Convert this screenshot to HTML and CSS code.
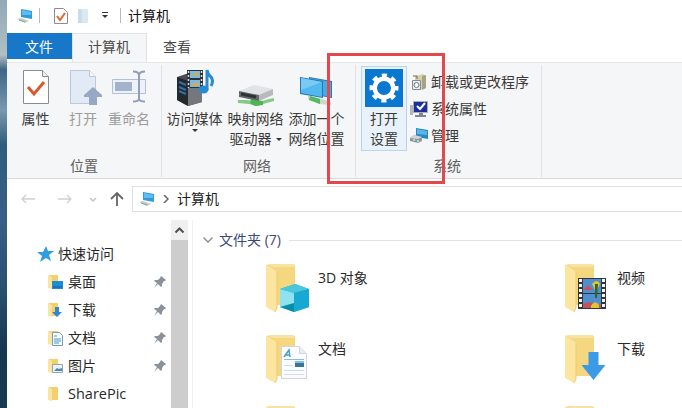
FILE: index.html
```html
<!DOCTYPE html>
<html lang="zh-CN">

<head>
  <meta charset="UTF-8" />
  <title>计算机</title>
  <link rel="stylesheet" href="styles.css">
</head>

<body>
  <!-- shared icons -->
  <svg class="defs" width="0" height="0">
    <symbol id="pc" viewBox="0 0 18 16">
      <path d="M5 1l11 2v8L5 9z" fill="#2e9bdc" />
      <path d="M6 2l9 2v3L6 7z" fill="#61bdf0" />
      <path d="M1 11l4-1 8 3-4 2z" fill="#c5cbd0" />
      <path d="M3 12l6 2" stroke="#8f9ba5" />
    </symbol>
    <symbol id="folder" viewBox="0 0 44 50">
      <path d="M1 2h28v40H10z" fill="#f5d77f" />
      <path d="M1 1h27v3H7z" fill="#f7e3a4" />
      <path d="M0 1l11 8v36l-2 4-9-5z" fill="#fce5a0" />
      <path d="M11 9v36l-2 4" fill="none" stroke="#edcb6d" />
    </symbol>
    <symbol id="small-folder" viewBox="0 0 14 16">
      <path d="M1 1h9v13H1z" fill="#f4cf6e" />
      <path d="M0 1l4 2v12l-4-1z" fill="#fbe3a0" />
    </symbol>
    <symbol id="pin" viewBox="0 0 12 12">
      <path d="M7 0l5 4-1 1-1 0-2 3 0 2-1 1-3-3-4 4 3-5-3-2 1-1h3l2-2z" fill="#8a9198" />
    </symbol>
    <symbol id="down" viewBox="0 0 24 28">
      <path d="M7 0h10v13h7L12 28 0 13h7z" fill="#3b9be6" />
    </symbol>
  </svg>

  <div class="desktop">
    <div class="window">
      <header class="titlebar">
        <svg class="title-pc" width="18" height="16"><use href="#pc" /></svg>
        <i class="title-sep"></i>
        <svg class="title-check" width="14" height="16" viewBox="0 0 14 16">
          <path d="M.5 .5h9l4 4v11H.5z" fill="#fff" stroke="#8d8d8d" />
          <path d="M3 8l3 4 5-7" fill="none" stroke="#e0672c" stroke-width="2" />
        </svg>
        <svg class="title-page" width="11" height="16" viewBox="0 0 11 16">
          <path d="M0 1h10v14H0z" fill="#dae8f3" />
          <path d="M0 1l4 1v13H0z" fill="#c9dcea" />
        </svg>
        <svg class="title-more" width="8" height="7" viewBox="0 0 8 7">
          <path d="M1 .5h6" stroke="#333" />
          <path d="M1 3h6L4 6z" fill="#333" />
        </svg>
        <i class="title-sep"></i>
        <span class="title">计算机</span>
      </header>

      <nav class="tabs">
        <span class="tab file">文件</span>
        <span class="tab active">计算机</span>
        <span class="tab">查看</span>
      </nav>

      <section class="ribbon">
        <div class="group location">
          <div class="buttons">
            <div class="big w-prop">
              <svg width="38" height="38" viewBox="0 0 38 38">
                <path d="M6.500 1.500h19l6 6v27h-25z" fill="#fff" stroke="#8b8b8b" />
                <path d="M25.500 1.500v6h6" fill="#eee" stroke="#8b8b8b" />
                <path d="M11 18l6 7 10-12" fill="none" stroke="#d9592b" stroke-width="3" />
              </svg>
              <span>属性</span>
            </div>
            <div class="big w-open disabled">
              <svg width="38" height="38" viewBox="0 0 38 38">
                <path d="M6.500 1.500h19l6 6v27h-25z" fill="#e2eaf5" stroke="#bcc8da" />
                <path d="M25.500 1.500v6h6" fill="#f4f7fb" stroke="#bcc8da" />
                <path d="M20 28v-2l9-8 9 8v2h-5v8h-8v-8z" fill="#98a8c4" />
              </svg>
              <span>打开</span>
            </div>
            <div class="big w-rename disabled">
              <svg width="38" height="38" viewBox="0 0 38 38">
                <path d="M2.500 10.500h33v14h-33z" fill="#edf2f9" stroke="#b1c0d8" />
                <path d="M5 13h17v9H5z" fill="#a3b3cd" />
                <path d="M23 2.500q6 0 6 4v23q0 3-6 3M35 2.500q-6 0-6 4v23q0 3 6 3" fill="none" stroke="#909eb8" stroke-width="2" />
              </svg>
              <span>重命名</span>
            </div>
          </div>
          <div class="caption">位置</div>
        </div>

        <div class="group network">
          <div class="buttons">
            <div class="big w-net">
              <svg width="38" height="38" viewBox="0 0 38 38">
                <path d="M1 8l12-4 13 5v24l-14 4L1 31z" fill="#4a4e54" />
                <path d="M1 8l11 4v25L1 31z" fill="#24282d" />
                <path d="M12 12l14-4v25l-14 4z" fill="#74787d" />
                <path d="M3 13l7 3M3 18l7 3M3 22l7 3" stroke="#2c70a5" stroke-width="2" />
                <path d="M11 1h16v18H11z" fill="#2d3035" />
                <path d="M14 2h10v7H14zM14 11h10v7H14z" fill="#80b7dc" />
                <path d="M17 7l3-4 3 4zM16 17l3-4 5 4z" fill="#d7ae45" />
                <path d="M12.500 2v17M25.500 2v17" stroke="#ddd" stroke-width="1.500" stroke-dasharray="2 2" />
                <ellipse cx="27.500" cy="20.500" rx="5" ry="4" fill="#268bd2" />
                <path d="M31 21V1q1 5 4 7 3 4 0 9" fill="none" stroke="#268bd2" stroke-width="3" />
              </svg>
              <span>访问媒体</span>
              <i class="arrow"></i>
            </div>
            <div class="big w-net">
              <svg width="38" height="38" viewBox="0 0 38 38">
                <path d="M1 31h9l12 2 10-3 5-1v3l-11 3-7 2-7-2-11-1z" fill="#83c988" />
                <path d="M14 30l12 2v4l-8 1-5-3z" fill="#4db653" />
                <path d="M2 22l15-6 19 4-14 7z" fill="#e1e3e4" />
                <path d="M2 22l20 4v6L2 28z" fill="#64686a" />
                <path d="M22 26l14-6v6l-14 6z" fill="#b6babc" />
                <path d="M4 25l15 3" stroke="#2e3335" stroke-width="3" />
              </svg>
              <span>映射网络</span>
              <span>驱动器<i class="arrow side"></i></span>
            </div>
            <div class="big w-net">
              <svg width="38" height="38" viewBox="0 0 38 38">
                <path d="M10 27l11 2 12 4v3l-12-1-11-5z" fill="#c8d8cb" />
                <path d="M12 27l10 3v5l-11-4z" fill="#53b964" />
                <path d="M11 8l23 4v17l-23-4z" fill="#3178b5" />
                <path d="M12 9l21 4v15l-21-4z" fill="#3eb0e6" />
                <path d="M2 8l23 4v17L2 25z" fill="#2875b5" />
                <path d="M3 9l21 4v15L3 24z" fill="#51b9ed" />
                <path d="M3 9l21 4L3 21z" fill="#79cbf3" />
              </svg>
              <span>添加一个</span>
              <span>网络位置</span>
            </div>
          </div>
          <div class="caption">网络</div>
        </div>

        <div class="group system">
          <div class="buttons">
            <div class="big settings">
              <svg width="38" height="38" viewBox="0 0 38 38">
                <path d="M0 0h38v38H0z" fill="#0a78d1" />
                <circle cx="19" cy="19" r="12.500" fill="none" stroke="#fff" stroke-width="4" stroke-dasharray="5 4.817" stroke-dashoffset="2.500" />
                <circle cx="19" cy="19" r="9.250" fill="none" stroke="#fff" stroke-width="4.500" />
              </svg>
              <span>打开</span>
              <span>设置</span>
            </div>
            <div class="small-list">
              <div class="small">
                <svg width="18" height="18" viewBox="0 0 18 18">
                  <path d="M5 3l8-2 3 2v12l-6 2-5-3z" fill="#d9d0a9" />
                  <path d="M12 3l4-1v13l-4 2z" fill="#a4a288" />
                  <path d="M2.500 7.500h8v9h-8z" fill="#e9ecee" stroke="#858c91" />
                  <circle cx="6.500" cy="12" r="2.500" fill="#fff" stroke="#637888" />
                  <path d="M3 3h4v3" fill="none" stroke="#6b6b58" />
                </svg>
                <span>卸载或更改程序</span>
              </div>
              <div class="small">
                <svg width="18" height="18" viewBox="0 0 18 18">
                  <path d="M0 5h3v10H0z" fill="#b1b6bd" />
                  <path d="M3 1h15v12H3z" fill="#a9b0bb" />
                  <path d="M4 2h13v10H4z" fill="#1c2f9c" />
                  <path d="M7 6l3 3 5-6" fill="none" stroke="#fff" stroke-width="2" />
                  <path d="M9 13h4v2h3v2H5v-2h4z" fill="#7e8490" />
                </svg>
                <span>系统属性</span>
              </div>
              <div class="small">
                <svg width="18" height="18" viewBox="0 0 18 18">
                  <path d="M6 1l12 2v9L6 10z" fill="#2489c5" />
                  <path d="M7 2l10 2v4L7 7z" fill="#59b5e5" />
                  <path d="M0 11l4-3 8 2v4l-4 2-8-2z" fill="#8c9a9f" />
                  <path d="M0 11l4-3 8 2-4 2z" fill="#cfd7da" />
                  <path d="M4 12v2M8 13v2" stroke="#fff" />
                </svg>
                <span>管理</span>
              </div>
            </div>
          </div>
          <div class="caption">系统</div>
        </div>
      </section>

      <div class="address-row">
        <svg class="nav-arrows" width="106" height="20" viewBox="0 0 106 20" fill="none">
          <path d="M15 10H2M6 6l-4 4 4 4M38 10h13M47 6l4 4-4 4" stroke="#cfcfcf" stroke-width="1.300" />
          <path d="M70 9l3 3 3-3" stroke="#c4c4c4" stroke-width="1.500" />
          <path d="M97 17V4M91 10l6-6 6 6" stroke="#666" stroke-width="1.800" />
        </svg>
        <div class="address">
          <svg width="18" height="16"><use href="#pc" /></svg>
          <svg class="crumb" width="6" height="8" viewBox="0 0 6 8"><path d="M1 0l4 4-4 4" fill="none" stroke="#666" stroke-width="1.500" /></svg>
          <span>计算机</span>
        </div>
      </div>

      <main class="body">
        <aside class="sidebar">
          <div class="side-head">
            <svg width="17" height="16" viewBox="0 0 17 16"><path d="M9 0l2 5 6 0-5 4 2 6-5-3-6 4 2-6-5-4h6z" fill="#2f9ee2" /></svg>
            <span>快速访问</span>
          </div>
          <div class="side-item">
            <svg width="15" height="16" viewBox="0 0 15 16"><use href="#small-folder" width="14" height="16" /><path d="M4 7h11v8H4z" fill="#1c8cd7" /><path d="M5 13h9" stroke="#145c9a" /></svg>
            <span>桌面</span>
            <svg class="pin" width="12" height="12"><use href="#pin" /></svg>
          </div>
          <div class="side-item">
            <svg width="15" height="16" viewBox="0 0 15 16"><use href="#small-folder" width="14" height="16" /><path d="M7 5h4v5h3l-5 5-5-5h3z" fill="#3188d0" /></svg>
            <span>下载</span>
            <svg class="pin" width="12" height="12"><use href="#pin" /></svg>
          </div>
          <div class="side-item">
            <svg width="15" height="16" viewBox="0 0 15 16"><use href="#small-folder" width="14" height="16" /><path d="M4.500 2.500h7l3 3v10h-10z" fill="#f7fbff" stroke="#7a9ab2" /><path d="M6 6h3M6 9h7M6 11h7M6 13h5" stroke="#4a91c4" /></svg>
            <span>文档</span>
            <svg class="pin" width="12" height="12"><use href="#pin" /></svg>
          </div>
          <div class="side-item">
            <svg width="15" height="16" viewBox="0 0 15 16"><use href="#small-folder" width="14" height="16" /><path d="M4.500 6.500h10v8h-10z" fill="#e9f3fa" stroke="#94a5b1" /><path d="M6 13l3-3 2 1 3-1v3z" fill="#4f87ae" /></svg>
            <span>图片</span>
            <svg class="pin" width="12" height="12"><use href="#pin" /></svg>
          </div>
          <div class="side-item">
            <svg width="15" height="16" viewBox="0 0 15 16"><use href="#small-folder" width="14" height="16" /></svg>
            <span class="latin">SharePic</span>
          </div>
        </aside>

        <div class="scrollbar">
          <svg width="17" height="20" viewBox="0 0 17 20"><path d="M4.500 12.500l4-4 4 4" fill="none" stroke="#505050" stroke-width="2" /></svg>
          <div class="thumb"></div>
        </div>

        <section class="content">
          <div class="section-head">
            <svg width="10" height="6" viewBox="0 0 10 6"><path d="M.5 .5L5 5 9.500 .5" fill="none" stroke="#888" stroke-width="1.300" /></svg>
            <span>文件夹 (7)</span>
            <i></i>
          </div>
          <div class="folders">
            <div class="folder">
              <svg width="44" height="50" viewBox="0 0 44 50">
                <use href="#folder" width="44" height="50" />
                <path d="M14 26l15-5 14 5v18l-15 5-14-5z" fill="#20b1d2" />
                <path d="M14 26l14 4v19l-14-5z" fill="#8fe3ee" />
                <path d="M14 26l15-5 14 5-15 4z" fill="#49c8dd" />
                <path d="M28 30l15-4v18l-15 5z" fill="#18a9d3" />
                <path d="M14 44l14-4v9z" fill="#078da9" />
              </svg>
              <span>3D 对象</span>
            </div>
            <div class="folder">
              <svg width="44" height="50" viewBox="0 0 44 50">
                <use href="#folder" width="44" height="50" />
                <path d="M13 15h28v31H13z" fill="#32353a" />
                <path d="M18 16h18v14H18zM18 31h18v14H18z" fill="#4f8fd0" />
                <path d="M18 27l5-5 5 5zM18 41l6-2 12 3v3H18z" fill="#c4545b" />
                <path d="M27 21q5-6 8 0l-3 6h-2zM26 43q4-7 8-1v3h-8z" fill="#e3c62f" />
                <path d="M30 21h3l-1 14h-2z" fill="#2c6828" />
                <path d="M15.500 16v29M38.500 16v29" stroke="#f5f5f5" stroke-width="3" stroke-dasharray="3 2" />
              </svg>
              <span>视频</span>
            </div>
            <div class="folder">
              <svg width="44" height="50" viewBox="0 0 44 50">
                <use href="#folder" width="44" height="50" />
                <path d="M15.500 12.500h18l7 7v25h-25z" fill="#fbfcff" stroke="#d0d5df" />
                <path d="M33.500 12.500v7h7" fill="#eceaf2" stroke="#d0d5df" />
                <path d="M18 23l5-7 1 7M20 21h4" fill="none" stroke="#499dc6" stroke-width="1.500" />
                <path d="M18 25.500h20" stroke="#8bbbd5" />
                <path d="M18 31.500h9M18 36.500h20M18 40.500h20" stroke="#d4dae5" />
                <path d="M29 27h9v6h-9z" fill="#3c7394" />
                <path d="M29 27h9v2h-9z" fill="#7ec2df" />
              </svg>
              <span>文档</span>
            </div>
            <div class="folder">
              <svg width="44" height="50" viewBox="0 0 44 50">
                <use href="#folder" width="44" height="50" />
                <use href="#down" x="16" y="18" width="25" height="28" />
              </svg>
              <span>下载</span>
            </div>
            <div class="folder"><svg width="44" height="50"><use href="#folder" /></svg></div>
            <div class="folder"><svg width="44" height="50"><use href="#folder" /></svg></div>
          </div>
        </section>
      </main>
    </div>
    <div class="highlight"></div>
  </div>
</body>

</html>
```
FILE: styles.css
```css
* {
  box-sizing: border-box;
}

body {
  margin: 0;
  font-family: "Open Sans", "Noto Sans CJK SC", sans-serif;
  font-size: 14px;
  line-height: 20px;
  color: #3a3a3a;
}

svg {
  display: block;
  flex-shrink: 0;
}

.defs {
  position: absolute;
}

.desktop {
  position: relative;
  width: 682px;
  height: 408px;
  padding-left: 7px;
  overflow: hidden;
  background: linear-gradient(#91a8b7, #b3bfc0 55px, #3f6685 70px, #7899ae 110px, #315c7d 145px, #385f87 220px, #29506d 290px, #153850 350px, #193c54);
}

.window {
  height: 408px;
  background: #fff;
  overflow: hidden;
}

.titlebar {
  display: flex;
  align-items: center;
  height: 33px;
  padding: 0 0 2px 9px;
}

.title-sep {
  width: 1px;
  height: 15px;
  margin-left: 5px;
  background: #b9b9b9;
}

.title-check {
  margin-left: 14px;
}

.title-page {
  margin-left: 10px;
}

.title-more {
  margin-left: 12px;
}

.title-more + .title-sep {
  margin-left: 11px;
}

.title {
  margin-left: 7px;
  color: #111;
}

.tabs {
  display: flex;
  height: 29px;
}

.tab {
  height: 29px;
  padding: 4px 16px;
  color: #4a4a4a;
}

.file {
  width: 65px;
  height: 26px;
  padding: 4px 0 0 18px;
  background: #1777c8;
  color: #fff;
}

.active {
  width: 75px;
  border: 1px solid #e0e1e2;
  border-bottom: 0;
  padding: 3px 15px;
  background: #f5f6f7;
}

.ribbon {
  display: flex;
  height: 117px;
  border-top: 1px solid #e5e7e9;
  border-bottom: 1px solid #d9dadb;
  background: #f5f6f7;
}

.group {
  height: 112px;
  margin-top: 2px;
  border-right: 1px solid #e1e2e3;
}

.location {
  width: 155px;
}

.network {
  width: 194px;
}

.system {
  width: 186px;
}

.buttons {
  display: flex;
  height: 91px;
}

.caption {
  padding-right: 3px;
  text-align: center;
  color: #606060;
}

.location .caption {
  padding-right: 0;
}

.big {
  display: flex;
  flex-direction: column;
  align-items: center;
  padding-top: 4px;
  white-space: nowrap;
}

.big svg {
  margin-bottom: 2px;
}

.disabled {
  color: #9c9c9c;
}

.w-prop {
  width: 43px;
  margin-left: 7px;
}

.w-open {
  width: 44px;
  margin-left: 4px;
}

.w-rename {
  width: 48px;
}

.w-net {
  width: 61px;
}

.network .buttons {
  padding-left: 2px;
}

.arrow {
  border: 3px solid transparent;
  border-top-color: #333;
  border-bottom: 0;
}

.side {
  display: inline-block;
  margin-left: 4px;
  vertical-align: 3px;
}

.settings {
  width: 46px;
  height: 85px;
  margin: 1px 0 0 5px;
  padding-top: 2px;
  border: 1px solid #b8d5ec;
  background: #e9f2fa;
}

.small-list {
  display: flex;
  flex-direction: column;
  gap: 7px;
  padding: 7px 0 0 3px;
}

.small {
  display: flex;
  align-items: center;
  gap: 3px;
  white-space: nowrap;
}

.address-row {
  display: flex;
  align-items: center;
  height: 39px;
  padding-left: 13px;
}

.address {
  display: flex;
  align-items: center;
  flex: 1;
  height: 26px;
  margin-left: 6px;
  padding-left: 5px;
  border: 1px solid #dfdfdf;
  border-right: 0;
  color: #222;
}

.crumb {
  margin: 0 8px 0 7px;
}

.body {
  display: flex;
  height: 190px;
  padding-top: 2px;
}

.sidebar {
  width: 164px;
  padding-top: 20px;
  color: #282828;
}

.side-head,
.side-item {
  display: flex;
  align-items: center;
  height: 28px;
}

.side-head {
  gap: 4px;
  padding-left: 30px;
}

.side-item {
  gap: 5px;
  padding-left: 41px;
}

.pin {
  margin: 0 5px 0 auto;
}

.latin {
  font-size: 14.5px;
}

.scrollbar {
  width: 17px;
  background: #f0f0f0;
}

.thumb {
  height: 170px;
  background: #cdcdcd;
}

.content {
  flex: 1;
  margin-left: 4px;
  padding-top: 10px;
  border-left: 1px solid #f1f1f1;
}

.section-head {
  display: flex;
  align-items: center;
  gap: 6px;
  padding-left: 10px;
  color: #3a4877;
}

.section-head i {
  flex: 1;
  height: 1px;
  margin-left: 2px;
  background: #e3e3e3;
}

.folders {
  display: grid;
  grid-template-columns: 299px 1fr;
  grid-auto-rows: 71px;
  padding: 13px 0 0 73px;
}

.folder {
  display: flex;
  gap: 8px;
}

.folder span {
  margin-top: 5px;
  color: #282828;
}

/* frame drawn over the ribbon */
.highlight {
  position: absolute;
  left: 327px;
  top: 53px;
  width: 118px;
  height: 131px;
  border: 3px solid #e4474c;
}
```
